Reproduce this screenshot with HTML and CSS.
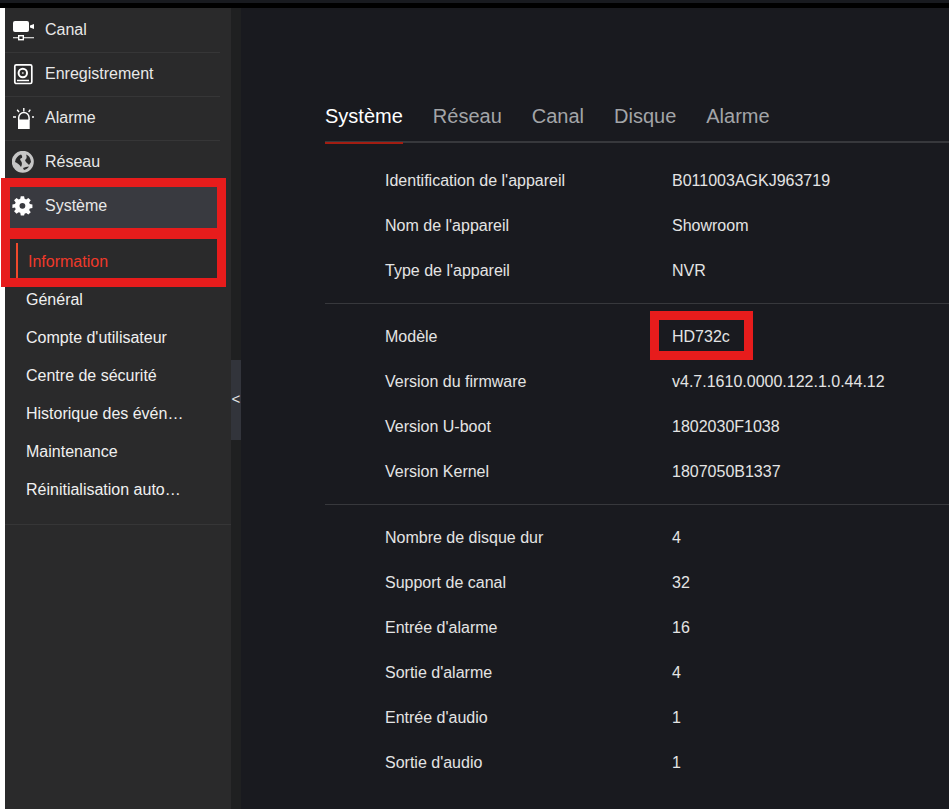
FILE: index.html
```html
<!DOCTYPE html>
<html lang="fr">
<head>
<meta charset="utf-8">
<title>Système</title>
<link rel="stylesheet" href="styles.css">
</head>
<body>
<div class="topbar"></div>
<div class="app">
  <aside class="sidebar">
    <ul class="menu">
      <li class="menu-item">
        <svg class="icon" viewBox="0 0 22 22"><rect x="1" y="2" width="16" height="11" rx="2" fill="#fff"/><path fill="#fff" d="M18 6.500L22 5v5l-4-1.500z"/><path fill="none" stroke="#fff" stroke-width="1.100" d="M1 18.700h5.500M11.500 18.700H22"/><rect x="6.700" y="16.700" width="4.600" height="4" fill="none" stroke="#fff" stroke-width="1.400"/></svg>
        <span>Canal</span>
      </li>
      <li class="menu-item">
        <svg class="icon" viewBox="0 0 22 22"><rect x="2.800" y="1.800" width="17" height="18.700" rx="1.500" fill="none" stroke="#fff" stroke-width="1.700"/><circle cx="10.800" cy="10" r="4.200" fill="none" stroke="#fff" stroke-width="2"/><circle cx="10.800" cy="10" r="1" fill="#bbb"/><path stroke="#fff" stroke-width="1.500" d="M5 17.500h12"/></svg>
        <span>Enregistrement</span>
      </li>
      <li class="menu-item">
        <svg class="icon" viewBox="0 0 22 22"><path fill="#fff" d="M6 12.500h11.700V22H6z"/><path fill="none" stroke="#fff" stroke-width="1.500" d="M6.700 13v-2.300a5.200 5.200 0 0 1 10.400 0V13"/><path fill="none" stroke="#fff" stroke-width="1.400" d="M11.800 1v3.500M5.200 2.700L7 5M18.300 2.700L16.600 5M1 10h3M20 10h2.800"/></svg>
        <span>Alarme</span>
      </li>
      <li class="menu-item">
        <svg class="icon" viewBox="0 0 22 22"><circle cx="10.800" cy="10.800" r="11" fill="#c6c6c6"/><path fill="#2a2a2b" d="M9 3.500C6 4.500 3.500 7 3 11c2 1 4 2 6 5 1-2 1.500-4 0-6C7.500 9 8 7 10 7c.5-1.500 0-2.500-1-3.500zM14 3.600c3 .9 4.500 3.400 5 7.400l-2 3c-1.500-1.500-3.500-3-4-5 2-1 2-3.500 1-5.400zM11 17c2-1 4-1 6-1.500-1 2-3 3-5 3.500z"/></svg>
        <span>Réseau</span>
      </li>
      <li class="menu-item menu-item-active">
        <svg class="icon" viewBox="-0.5 -0.500 26.400 26.400"><path fill="#fff" fill-rule="evenodd" d="M10 1h4l.6 3.100 1.900.8L19.100 3 22 5.900l-1.900 2.600.8 1.900L24 11v4l-3.100.6-.8 1.900 1.900 2.600-2.900 2.900-2.600-1.900-1.900.8L14 24h-4l-.6-3.100-1.900-.8L4.900 22 2 19.100l1.900-2.600-.8-1.900L0 15v-4l3.100-.6.8-1.900L2 5.900 4.900 3l2.600 1.900 1.900-.8zM12 9a3.500 3.500 0 1 0 0 7 3.500 3.500 0 0 0 0-7z"/></svg>
        <span>Système</span>
      </li>
    </ul>
    <ul class="submenu">
      <li class="sub-item sub-item-active"><span class="sub-label">Information</span></li>
      <li class="sub-item"><span class="sub-label">Général</span></li>
      <li class="sub-item"><span class="sub-label">Compte d'utilisateur</span></li>
      <li class="sub-item"><span class="sub-label">Centre de sécurité</span></li>
      <li class="sub-item"><span class="sub-label">Historique des évén…</span></li>
      <li class="sub-item"><span class="sub-label">Maintenance</span></li>
      <li class="sub-item"><span class="sub-label">Réinitialisation auto…</span></li>
    </ul>
  </aside>
  <div class="gutter"><div class="collapse">&lt;</div></div>
  <main class="content">
    <nav class="tabs">
      <span class="tab tab-active">Système</span>
      <span class="tab">Réseau</span>
      <span class="tab">Canal</span>
      <span class="tab">Disque</span>
      <span class="tab">Alarme</span>
    </nav>
    <section class="group group-first">
      <div class="row"><span class="key">Identification de l'appareil</span><span class="val">B011003AGKJ963719</span></div>
      <div class="row"><span class="key">Nom de l'appareil</span><span class="val">Showroom</span></div>
      <div class="row"><span class="key">Type de l'appareil</span><span class="val">NVR</span></div>
    </section>
    <section class="group">
      <div class="row"><span class="key">Modèle</span><span class="val">HD732c</span></div>
      <div class="row"><span class="key">Version du firmware</span><span class="val">v4.7.1610.0000.122.1.0.44.12</span></div>
      <div class="row"><span class="key">Version U-boot</span><span class="val">1802030F1038</span></div>
      <div class="row"><span class="key">Version Kernel</span><span class="val">1807050B1337</span></div>
    </section>
    <section class="group group-last">
      <div class="row"><span class="key">Nombre de disque dur</span><span class="val">4</span></div>
      <div class="row"><span class="key">Support de canal</span><span class="val">32</span></div>
      <div class="row"><span class="key">Entrée d'alarme</span><span class="val">16</span></div>
      <div class="row"><span class="key">Sortie d'alarme</span><span class="val">4</span></div>
      <div class="row"><span class="key">Entrée d'audio</span><span class="val">1</span></div>
      <div class="row"><span class="key">Sortie d'audio</span><span class="val">1</span></div>
    </section>
  </main>
</div>
<div class="mark mark-system"></div>
<div class="mark mark-info"></div>
<div class="mark mark-model"></div>
</body>
</html>
```
FILE: styles.css
```css
* { box-sizing: border-box; }
html, body { margin: 0; padding: 0; height: 100%; }
body {
  position: relative;
  overflow: hidden;
  background: #fff;
  font-family: "Liberation Sans", Arial, sans-serif;
  font-size: 16px;
  color: #e6e6e6;
}
ul { list-style: none; margin: 0; padding: 0; }
.topbar { height: 8px; background: #000; border-top: 3px solid #181a1f; }
.app { display: flex; height: 801px; margin-left: 5px; background: #191a1f; }
.sidebar { width: 226px; flex: none; background: #2a2a2b; }
.menu { padding-top: 1px; }
.menu-item {
  height: 44px;
  width: 215px;
  display: flex;
  align-items: center;
  gap: 11px;
  border-bottom: 1px solid #363637;
  padding: 0 0 2px 7px;
  color: #e8e8e8;
}
.icon { width: 22px; height: 22px; flex: none; }
.menu-item-active { background: #393a40; border-bottom: 0; }
.submenu { padding: 14px 0 15px; border-bottom: 1px solid #363637; }
.sub-item { height: 38px; display: flex; align-items: center; padding-left: 21px; color: #f0f0f0; }
.sub-label { white-space: nowrap; }
.sub-item-active { margin-left: 11px; padding-left: 10px; border-left: 2px solid #f04a2c; color: #f0392a; }
.gutter { width: 10px; flex: none; background: #1f2021; display: flex; align-items: center; }
.collapse {
  width: 10px;
  height: 80px;
  margin-top: -17px;
  padding-bottom: 3px;
  background: #32343b;
  color: #e6e6e6;
  font-size: 15px;
  display: flex;
  align-items: center;
  justify-content: center;
}
.content { flex: 1; padding: 85px 0 0 84px; min-width: 0; }
.tabs { display: flex; gap: 30px; height: 50px; border-bottom: 2px solid #37383c; }
.tab { font-size: 20px; height: 51px; padding-top: 12px; color: #a3a5a8; }
.tab-active { color: #fff; border-bottom: 2px solid #a31d12; }
.group { padding: 10px 0; border-bottom: 1px solid #37383c; }
.group-first { padding-top: 15px; }
.group-last { border-bottom: 0; }
.row { display: flex; height: 45px; align-items: center; padding-left: 60px; }
.key { width: 287px; color: #e4e4e4; }
.val { color: #e4e4e4; }
.mark { position: absolute; border: 9px solid #e71c1c; }
.mark-system { left: 1px; top: 178px; width: 225px; height: 61px; border-bottom-width: 11px; }
.mark-info { left: 1px; top: 228px; width: 225px; height: 59px; border-top-width: 11px; }
.mark-model { left: 650px; top: 311px; width: 103px; height: 49px; }
```
